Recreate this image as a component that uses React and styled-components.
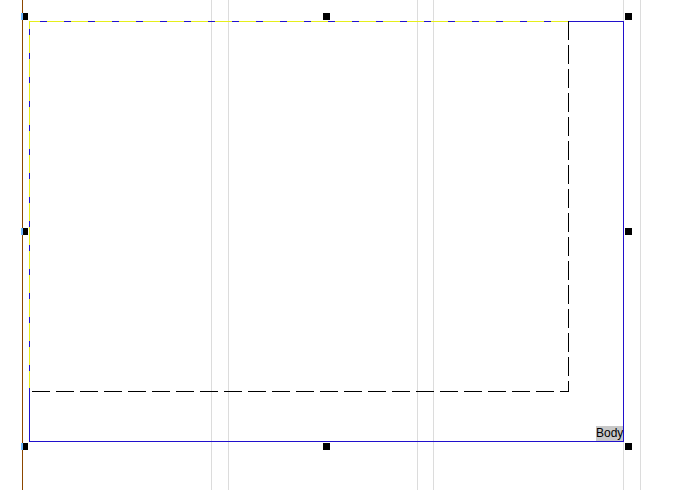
import React from "react";
import styled, { createGlobalStyle } from "styled-components";

const GlobalStyle = createGlobalStyle`
  html, body {
    margin: 0;
    padding: 0;
    background: #ffffff;
  }
`;

// design surface: the body frame sits in flow, guides and grips lie over it
const Canvas = styled.div`
  position: relative;
  width: 678px;
  height: 490px;
  box-sizing: border-box;
  padding: 21px 0 0 29px;
  overflow: hidden;
  background: #ffffff;
`;

const Guide = styled.div`
  position: absolute;
  top: 0;
  bottom: 0;
  left: ${(p) => p.$x}px;
  width: 1px;
  background: ${(p) => p.$color || "#dcdcdc"};
`;

const BodyFrame = styled.div`
  position: relative;
  display: flex;
  flex-direction: column;
  width: 595px;
  height: 421px;
  box-sizing: border-box;
  border: 1px solid #2010cc;
`;

const Selection = styled.div`
  position: relative;
  width: 540px;
  height: 371px;
  margin: -1px 0 0 -1px;
`;

const TopEdge = styled.div`
  position: absolute;
  left: 0;
  top: 0;
  width: 539px;
  height: 1px;
  background: repeating-linear-gradient(
    to right,
    #e6ee1c 0 11px,
    #2010cc 11px 18px,
    #e6ee1c 18px 24px
  );
`;

const LeftEdge = styled.div`
  position: absolute;
  left: 0;
  top: 0;
  width: 1px;
  height: 367px;
  background: repeating-linear-gradient(
    to bottom,
    #e6ee1c 0 8px,
    #2010cc 8px 14px,
    #e6ee1c 14px 24px
  );
`;

const RightEdge = styled.div`
  position: absolute;
  right: 0;
  top: 0;
  width: 1px;
  height: 100%;
  background: repeating-linear-gradient(
    to bottom,
    #000000 0 19px,
    transparent 19px 24px
  );
`;

const BottomEdge = styled.div`
  position: absolute;
  left: 0;
  bottom: 0;
  width: 100%;
  height: 1px;
  background: repeating-linear-gradient(
    to right,
    transparent 0 3px,
    #000000 3px 21px,
    transparent 21px 24px
  );
`;

const BodyTag = styled.div`
  margin-top: auto;
  align-self: flex-end;
  width: 27px;
  height: 15px;
  background: #c8c8c8;
  color: #000000;
  font-family: "Liberation Sans", Arial, sans-serif;
  font-size: 12px;
  line-height: 15px;
  text-align: center;
  white-space: nowrap;
`;

const Handle = styled.div`
  position: absolute;
  left: ${(p) => p.$x}px;
  top: ${(p) => p.$y}px;
  width: 7px;
  height: 7px;
  box-sizing: border-box;
  background: #000000;
  border-left: ${(p) => (p.$onGuide ? "2px solid #70b8ff" : "none")};
`;

const guides = [211, 228, 417, 433, 623, 640];
const handles = [
  { x: 21, y: 13, onGuide: true },
  { x: 323, y: 13 },
  { x: 625, y: 13 },
  { x: 21, y: 228, onGuide: true },
  { x: 625, y: 228 },
  { x: 21, y: 443, onGuide: true },
  { x: 323, y: 443 },
  { x: 625, y: 443 },
];

export default function App() {
  return (
    <>
      <GlobalStyle />
      <Canvas>
        {guides.map((x) => (
          <Guide key={x} $x={x} />
        ))}
        <Guide $x={22} $color="#8c4800" />
        <BodyFrame>
          <Selection>
            <TopEdge />
            <LeftEdge />
            <RightEdge />
            <BottomEdge />
          </Selection>
          <BodyTag>Body</BodyTag>
        </BodyFrame>
        {handles.map((h, i) => (
          <Handle key={i} $x={h.x} $y={h.y} $onGuide={h.onGuide} />
        ))}
      </Canvas>
    </>
  );
}
